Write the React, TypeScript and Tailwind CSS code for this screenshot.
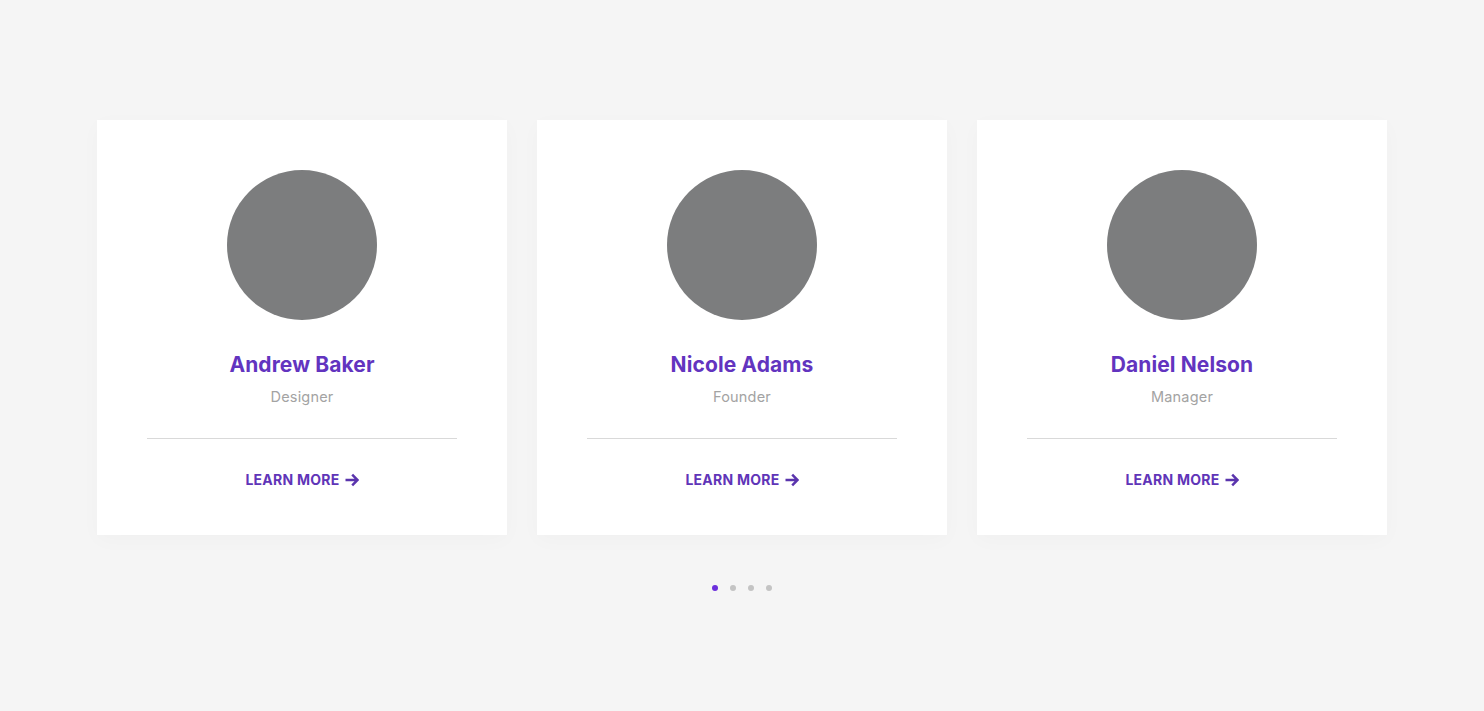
import React from "react";

const people = [
  { name: "Andrew Baker", role: "Designer" },
  { name: "Nicole Adams", role: "Founder" },
  { name: "Daniel Nelson", role: "Manager" },
];

function Arrow() {
  return (
    <svg width="14" height="14" viewBox="0 0 14 14" fill="none" className="ml-[5px]">
      <path d="M0.5 7H12.5M7.2 1.6L12.6 7L7.2 12.4" stroke="#5a34ad" strokeWidth="2.5" />
    </svg>
  );
}

export default function App() {
  return (
    <div className="min-h-[711px] bg-[#f5f5f5] pt-[120px] font-['Inter',sans-serif]">
      <div className="flex justify-center gap-[30px]">
        {people.map((p) => (
          <div
            key={p.name}
            className="flex h-[415px] w-[410px] flex-col items-center bg-white px-[50px] pt-[50px] shadow-[0_5px_20px_rgba(0,0,0,0.025)]"
          >
            <div className="size-[150px] rounded-full bg-[#7c7d7e]" />
            <div className="mt-[31px] h-[28px] text-[21px] leading-[28px] font-bold tracking-[0.1px] text-[#6234bf]">
              {p.name}
            </div>
            <div className="mt-[8px] h-[20px] text-[14.5px] leading-[20px] tracking-[0.2px] text-[#a3a3a3]">{p.role}</div>
            <div className="mt-[31px] h-px w-full bg-[#d9d9d9]" />
            <div className="mt-[31px] flex h-[20px] items-center text-[14px] leading-[20px] font-bold tracking-[0.25px] text-[#5f35b8]">
              LEARN MORE
              <Arrow />
            </div>
          </div>
        ))}
      </div>
      <div className="mt-[50px] flex justify-center gap-[12px]">
        <span className="size-[6px] rounded-full bg-[#6c2fdc]" />
        <span className="size-[6px] rounded-full bg-[#c4c4c4]" />
        <span className="size-[6px] rounded-full bg-[#c4c4c4]" />
        <span className="size-[6px] rounded-full bg-[#c4c4c4]" />
      </div>
    </div>
  );
}
